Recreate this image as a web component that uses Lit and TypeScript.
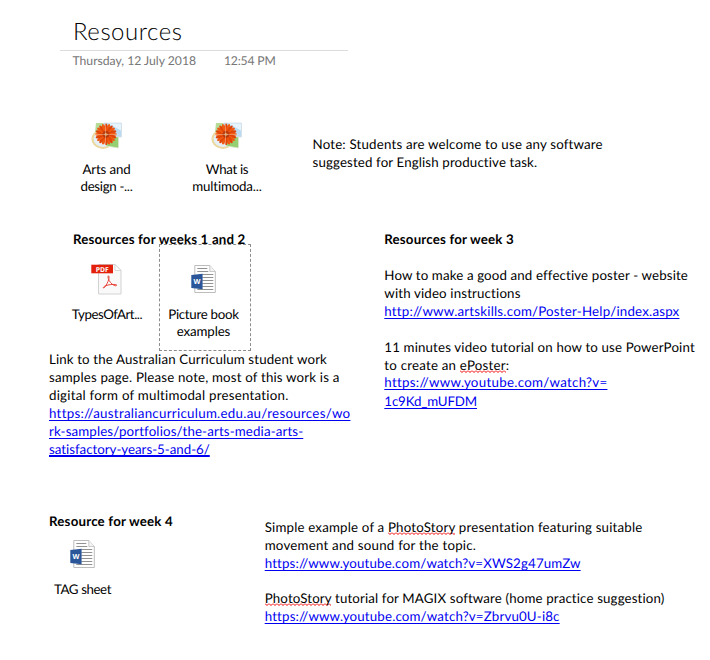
import { LitElement, html, svg, css, nothing } from "lit";
import { customElement, property, state } from "lit/decorators.js";
import { styleMap } from "lit/directives/style-map.js";

type Kind = "text" | "bold" | "link" | "link-end" | "title";
interface Line {
  text: string;
  width: number;
  kind?: Kind;
  misspelt?: string;
}

/** One line of note text, tracked so that it sets to the given measure. */
@customElement("note-line")
class NoteLine extends LitElement {
  @property({ attribute: false }) line: Line = { text: "", width: 0 };
  @state() private tracking = 0;

  static styles = css`
    :host { display: block; white-space: pre; }
    .run { display: inline-block; }
    .bold { font-weight: 700; }
    .title { font-weight: 300; }
    .link, .link-end {
      color: #0000f0;
      text-decoration: underline;
      text-decoration-thickness: 1px;
      text-underline-offset: 2px;
      text-decoration-skip-ink: none;
    }
    .link-end { text-decoration-thickness: 2px; text-underline-offset: 1px; }
    .misspelt {
      background: url("data:image/svg+xml,%3Csvg xmlns='http://www.w3.org/2000/svg' width='4' height='3'%3E%3Cpath d='M0 .5L2 2.5L4 .5' fill='none' stroke='%23f00000' stroke-width='1'/%3E%3C/svg%3E") repeat-x left bottom;
    }
  `;

  firstUpdated() {
    const run = this.renderRoot.querySelector(".run") as HTMLElement;
    const natural = run.getBoundingClientRect().width;
    this.tracking = (this.line.width - natural) / this.line.text.length;
  }

  render() {
    const { text, misspelt, kind = "text" } = this.line;
    const [before, after] = misspelt ? text.split(misspelt) : [text, ""];
    return html`<span class="run ${kind}" style=${styleMap({ letterSpacing: `${this.tracking}px` })}
      >${before}${misspelt ? html`<span class="misspelt">${misspelt}</span>` : nothing}${after}</span>`;
  }
}

const petals = Array.from({ length: 20 }, (_, i) => i * 18);

const pictureIcon = svg`
  <ellipse cx="13" cy="20" rx="10.5" ry="9" fill="#e4f1f8" stroke="#ecd9a0" stroke-width="2"/>
  <path d="M6 4H14V13H5Z" fill="#b4dc98"/>
  <path d="M13.5 4H31.5V18H15Z" fill="#b9dcf4" stroke="#d3dde3" stroke-width=".8"/>
  <path d="M18 4.5H31V11.5Z" fill="#e6f4fd"/>
  <path d="M16 18H28.5V29L16 27Z" fill="#96cf72" stroke="#dce9d4" stroke-width=".8"/>
  <circle cx="16" cy="15.3" r="8" fill="#e2480c"/>
  ${petals.map((a, i) => svg`<ellipse cx="16" cy="8.7" rx="1.5" ry="4.2" fill=${i % 2 ? "#f0590f" : "#e04408"} transform="rotate(${a} 16 15.3)"/>`)}
  <circle cx="16" cy="15.3" r="3.4" fill="#b8380c"/>
  <circle cx="16" cy="15.3" r="1.6" fill="#d8823c"/>
  <path d="M15.5 4.5V26.5M5 15.5H28" stroke="#fff" stroke-width=".8" opacity=".4"/>`;

const pdfIcon = svg`
  <path d="M8.5 4.5H25L31 10.5V34H8.5Z" fill="#f9f9f9" stroke="#d2d2d2"/>
  <path d="M25 4.5V10.5H31Z" fill="#fff" stroke="#cfcfcf" stroke-width=".8"/>
  <rect x="1.3" y="4.7" width="21.7" height="8.6" fill="#e3200c"/>
  <text x="12.2" y="11.5" text-anchor="middle" font-family="Open Sans" font-weight="700" font-size="6.8" fill="#fff">PDF</text>
  <path d="M18.2 15.8C20 16 19 21.5 14.5 27.5C13 28.8 12.6 27 15.5 25.8C18.5 24.6 23 24 26.5 24.8C27 26.6 23.5 26 20.5 22.5C18.4 20 17.6 16.6 18.2 15.8Z" fill="none" stroke="#e5332a" stroke-width=".9"/>`;

const wordIcon = svg`
  <g transform="translate(3.3 1)">
    <path d="M4.5 2.5H19.5L25 8.5V29.5H4.5Z" fill="#fff" stroke="#bdbdbd"/>
    <path d="M19.5 2.5V8.5H25" fill="#f4f4f4" stroke="#bdbdbd" stroke-width=".8"/>
    <path d="M7 5.5H17M7 8.5H18M12 11.5H23M12 14.5H23M12 17.5H23M12 20.5H23M12 23.5H23M7 26.5H23" stroke="#929292"/>
    <path d="M1 12L12.3 10.8V26.2L1 25Z" fill="#2a5699"/>
    <text x="6.7" y="21.3" text-anchor="middle" font-family="Open Sans" font-weight="700" font-size="7.2" fill="#fff">W</text>
  </g>`;

const icons = { picture: pictureIcon, pdf: pdfIcon, word: wordIcon };

/** An attached file: its icon over a centred label. */
@customElement("file-tile")
class FileTile extends LitElement {
  @property() icon: keyof typeof icons = "word";
  @property({ attribute: false }) label: Line[] = [];

  static styles = css`
    :host { display: flex; flex-direction: column; align-items: center; width: 90px; line-height: 17px; }
    svg { display: block; width: 34px; height: 36px; margin-bottom: var(--label-gap, 6px); }
  `;

  render() {
    return html`<svg viewBox="0 0 34 36">${icons[this.icon]}</svg>
      ${this.label.map((l) => html`<note-line .line=${l}></note-line>`)}`;
  }
}

const lines = (list: Line[]) => list.map((l) => html`<note-line .line=${l}></note-line>`);

@customElement("app-root")
class AppRoot extends LitElement {
  static styles = css`
    :host {
      display: block; position: relative; width: 710px; height: 660px; overflow: hidden;
      background: #fff; color: #000;
      font: 13.3px/18px Lato, "Liberation Sans", sans-serif;
      text-rendering: geometricPrecision;
    }
    header { width: 288px; margin-left: 60px; padding-top: 14px; }
    .heading { padding: 0 0 1px 13px; border-bottom: 1px solid #dcdcdc; font-size: 24px; line-height: 35px; }
    .date { display: flex; gap: 28px; padding: 1px 0 0 12.5px; color: #767676; font-size: 12.2px; }
    .note, file-tile { position: absolute; }
    .gap { height: 18px; }
    .tight { height: 17px; }
    .raised { margin: -1px 0 2px; }
    .intro { left: 312.5px; top: 135px; }
    .early { left: 73px; top: 230px; }
    .curriculum { left: 49px; top: 350px; }
    .week3 { left: 384.3px; top: 230px; }
    .week4 { left: 49px; top: 512px; }
    .stories { left: 264.7px; top: 518px; }
    .arts { left: 61.5px; top: 119px; }
    .multimodal { left: 182px; top: 119px; }
    .types { left: 62px; top: 260px; --label-gap: 10px; }
    .book { left: 158.5px; top: 262px; --label-gap: 8px; }
    .tag { left: 37.5px; top: 537px; --label-gap: 8px; }
    .selection { position: absolute; left: 159px; top: 244px; width: 90px; height: 105px; border: 1px dashed #8c8c8c; }
  `;

  render() {
    return html`
      <header>
        <div class="heading">${lines([{ text: "Resources", width: 109.5, kind: "title" }])}</div>
        <div class="date">${lines([{ text: "Thursday, 12 July 2018", width: 123.5 }, { text: "12:54 PM", width: 51.5 }])}</div>
      </header>

      <file-tile class="arts" icon="picture" .label=${[{ text: "Arts and", width: 48 }, { text: "design -...", width: 52 }]}></file-tile>
      <file-tile class="multimodal" icon="picture" .label=${[{ text: "What is", width: 42.5 }, { text: "multimoda...", width: 69.5 }]}></file-tile>

      <div class="note intro">${lines([
        { text: "Note: Students are welcome to use any software", width: 290 },
        { text: "suggested for English productive task.", width: 225 },
      ])}</div>

      <div class="note early">${lines([{ text: "Resources for weeks 1 and 2", width: 172.5, kind: "bold" }])}</div>
      <file-tile class="types" icon="pdf" .label=${[{ text: "TypesOfArt...", width: 70.5 }]}></file-tile>
      <file-tile class="book" icon="word" .label=${[{ text: "Picture book", width: 70.5 }, { text: "examples", width: 53.5 }]}></file-tile>
      <div class="selection"></div>

      <div class="note curriculum">${lines([
        { text: "Link to the Australian Curriculum student work", width: 278 },
        { text: "samples page. Please note, most of this work is a", width: 290.5 },
        { text: "digital form of multimodal presentation.", width: 240 },
        { text: "https://australiancurriculum.edu.au/resources/wo", width: 301, kind: "link" },
        { text: "rk-samples/portfolios/the-arts-media-arts-", width: 254, kind: "link" },
        { text: "satisfactory-years-5-and-6/", width: 161, kind: "link-end" },
      ])}</div>

      <div class="note week3">
        ${lines([{ text: "Resources for week 3", width: 129.5, kind: "bold" }])}
        <div class="gap"></div>
        ${lines([
          { text: "How to make a good and effective poster - website", width: 303.5 },
          { text: "with video instructions", width: 136.5 },
          { text: "http://www.artskills.com/Poster-Help/index.aspx", width: 294.7, kind: "link" },
        ])}
        <div class="gap"></div>
        ${lines([
          { text: "11 minutes video tutorial on how to use PowerPoint", width: 310.5 },
          { text: "to create an ePoster:", width: 125, misspelt: "ePoster" },
        ])}
        <div class="tight raised">${lines([{ text: "https://www.youtube.com/watch?v=", width: 222.7, kind: "link" }])}</div>
        ${lines([{ text: "1c9Kd_mUFDM", width: 92.7, kind: "link" }])}
      </div>

      <div class="note week4">${lines([{ text: "Resource for week 4", width: 124, kind: "bold" }])}</div>
      <file-tile class="tag" icon="word" .label=${[{ text: "TAG sheet", width: 57 }]}></file-tile>

      <div class="note stories">
        ${lines([
          { text: "Simple example of a PhotoStory presentation featuring suitable", width: 378, misspelt: "PhotoStory" },
          { text: "movement and sound for the topic.", width: 211.5 },
          { text: "https://www.youtube.com/watch?v=XWS2g47umZw", width: 315.5, kind: "link" },
        ])}
        <div class="gap tight"></div>
        ${lines([
          { text: "PhotoStory tutorial for MAGIX software (home practice suggestion)", width: 400, misspelt: "PhotoStory" },
          { text: "https://www.youtube.com/watch?v=Zbrvu0U-i8c", width: 294.5, kind: "link" },
        ])}
      </div>
    `;
  }
}
